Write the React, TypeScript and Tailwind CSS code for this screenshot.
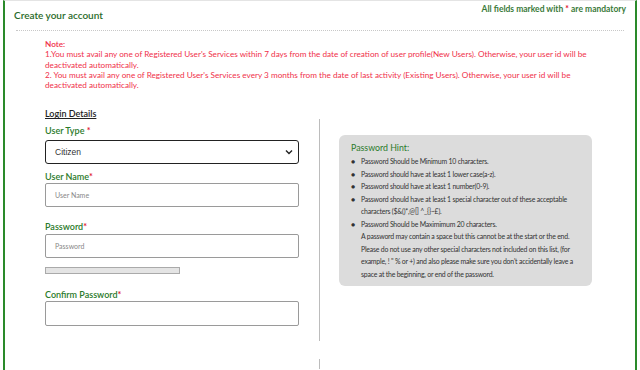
import React from 'react';

const Req = () => <span className="text-[#e0102a]">*</span>;

const hints = [
  ['Password Should be Minimum 10 characters.'],
  ['Password should have at least 1 lower case(a-z).'],
  ['Password should have at least 1 number(0-9).'],
  ['Password should have at least 1 special character out of these acceptable', 'characters ($&()*,@[] ^_{}~£).'],
  [
    'Password Should be Maximimum 20 characters.',
    'A password may contain a space but this cannot be at the start or the end.',
    'Please do not use any other special characters not included on this list, (for',
    "example, ! \" % or +) and also please make sure you don't accidentally leave a",
    'space at the beginning, or end of the password.',
  ],
];

const App: React.FC = () => {
  return (
    <div className="w-[640px] h-[370px] overflow-hidden bg-white" style={{ fontFamily: 'Lato, "Open Sans", sans-serif' }}>
      <div className="ml-[3px] mr-[3px] h-[370px] border-t border-t-[#e4e4e4] border-l-2 border-r-2 border-l-[#2a8a2a] border-r-[#2a8a2a]">
        <div className="flex justify-between px-[9px]">
          <h1 className="mt-[8px] text-[10px] font-semibold text-[#2a6b2a] leading-[12px]">Create your account</h1>
          <p className="mt-[3px] text-[8.5px] font-bold text-[#3a7a3a] leading-[10px]">
            All fields marked with <Req /> are mandatory
          </p>
        </div>
        <div className="mx-[11px] mt-[9px] border-t border-dotted border-[#c8c8c8]" />

        <div className="pl-[40px] pr-[30px] pt-[8px] text-[8.2px] leading-[10.3px] text-[#f0304a]">
          <p className="font-semibold">Note:</p>
          <p>1.You must avail any one of Registered User's Services within 7 days from the date of creation of user profile(New Users). Otherwise, your user id will be deactivated automatically.</p>
          <p>2. You must avail any one of Registered User's Services every 3 months from the date of last activity (Existing Users). Otherwise, your user id will be deactivated automatically.</p>
        </div>

        <div className="flex mt-[18px]">
          <div className="w-[314px] pl-[40px] pr-[20px]">
            <p className="text-[9px] font-semibold text-[#222] underline leading-[12px]">Login Details</p>
            <label className="block mt-[5px] text-[9px] font-semibold text-[#2a7a2a] leading-[12px]">
              User Type <Req />
            </label>
            <div className="mt-[3px] h-[24px] border border-[#222] rounded-[3px] flex items-center justify-between pl-[9px] pr-[5px]">
              <span className="text-[8.5px] text-[#333]" style={{ fontFamily: '"Liberation Sans", Arial, sans-serif' }}>Citizen</span>
              <svg width="8" height="6" viewBox="0 0 8 6"><path d="M1 1.5 L4 4.5 L7 1.5" fill="none" stroke="#222" strokeWidth="1.4" /></svg>
            </div>
            <label className="block mt-[7px] text-[9px] font-semibold text-[#2a7a2a] leading-[12px]">
              User Name<Req />
            </label>
            <div className="mt-[0px] h-[24px] border border-[#9a9a9a] rounded-[2px] flex items-center pl-[9px]">
              <span className="text-[7px] text-[#888]">User Name</span>
            </div>
            <label className="block mt-[14px] text-[9px] font-semibold text-[#2a7a2a] leading-[12px]">
              Password<Req />
            </label>
            <div className="mt-[1px] h-[24px] border border-[#9a9a9a] rounded-[2px] flex items-center pl-[9px]">
              <span className="text-[7px] text-[#888]">Password</span>
            </div>
            <div className="mt-[9px] w-[135px] h-[7px] bg-[#e4e4e4] border border-[#aaa]" />
            <label className="block mt-[15px] text-[9px] font-semibold text-[#2a7a2a] leading-[12px]">
              Confirm Password<Req />
            </label>
            <div className="mt-[0px] h-[25px] border border-[#9a9a9a] rounded-[2px]" />
          </div>

          <div className="flex flex-col">
            <div className="mt-[11px] w-px h-[222px] bg-[#bcbcbc]" />
            <div className="mt-[18px] w-px h-[10px] bg-[#bcbcbc]" />
          </div>

          <div className="pl-[19px]">
            <div className="mt-[27px] w-[253px] rounded-[6px] bg-[#dcdcdc] pl-[12px] pr-[6px] pt-[7px] pb-[6px]">
              <p className="text-[8.8px] text-[#2a7a2a] leading-[12px]">Password Hint:</p>
              <ul className="mt-[1px] text-[6.9px] leading-[12.5px] text-[#333] tracking-[-0.2px]">
                {hints.map((lines, i) => (
                  <li key={i} className="flex">
                    <span className="w-[10px] shrink-0 text-[7px]">●</span>
                    <div>
                      {lines.map((l, j) => (
                        <div key={j} className="whitespace-nowrap">{l}</div>
                      ))}
                    </div>
                  </li>
                ))}
              </ul>
            </div>
          </div>
        </div>
      </div>
    </div>
  );
};

export default App;
